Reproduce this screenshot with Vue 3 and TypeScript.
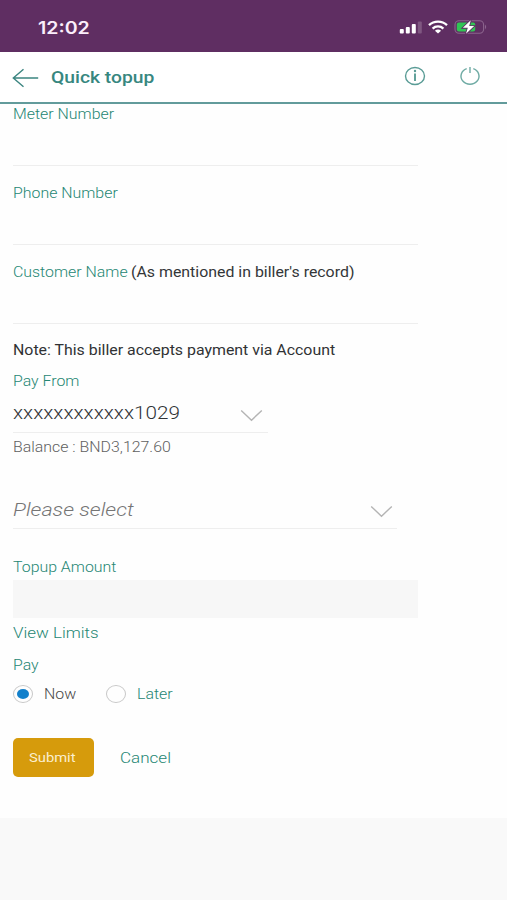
<script setup lang="ts">
import { ref } from 'vue'

interface Field {
  id: string
  label: string
  hint?: string
}

const fields: Field[] = [
  { id: 'meter', label: 'Meter Number' },
  { id: 'phone', label: 'Phone Number' },
  { id: 'customer', label: 'Customer Name', hint: "(As mentioned in biller's record)" },
]

const payWhen = ref<'now' | 'later'>('now')
</script>

<template>
  <div class="screen">
    <div class="status">
      <span class="wide clock">12:02</span>
      <div class="indicators">
        <svg class="signal" width="24" height="14" viewBox="0 0 24 14">
          <rect x="0.8" y="9" width="4" height="4.6" rx="1" fill="#fff" />
          <rect x="6.8" y="7" width="4" height="6.6" rx="1" fill="#fff" />
          <rect x="12.8" y="4" width="4" height="9.6" rx="1" fill="#fff" />
          <rect x="18.8" y="1.4" width="4" height="12.2" rx="1" fill="#fff" opacity="0.2" />
        </svg>
        <svg class="wifi" width="20" height="14" viewBox="0 0 20 14">
          <g fill="none" stroke="#fff" stroke-width="2.3">
            <path d="M1 5.2C6 .4 14 .4 19 5.2" />
            <path d="M4.6 8.6C7.6 5.7 12.4 5.7 15.4 8.6" />
          </g>
          <path d="M6.9 10.7Q10 8.2 13.1 10.7L10 13.6Z" fill="#fff" />
        </svg>
        <svg class="battery" width="34" height="16" viewBox="0 0 34 16">
          <rect x="1" y="1.7" width="28.6" height="12.6" rx="4" fill="none" stroke="#8b648d" stroke-width="1.1" />
          <path d="M31 5.6Q33.4 8 31 10.4Z" fill="#8b648d" />
          <rect x="2.8" y="3.4" width="18.4" height="9.2" rx="2" fill="#30c554" />
          <path d="M16.8 1.2L8.8 8.8H13.8L12 14.8L20.2 7H15.2Z" fill="#fff" stroke="#5f2e62" stroke-width="1.7" paint-order="stroke" />
        </svg>
      </div>
    </div>

    <header class="header">
      <svg class="back" width="27" height="20" viewBox="0 0 27 20">
        <path d="M11.5 1.2L1.3 10L11.5 18.8M1.3 10H26.2" fill="none" stroke="#3b8580" stroke-width="1.4" />
      </svg>
      <h1 class="wide title">Quick topup</h1>
      <svg class="info" width="22" height="20" viewBox="0 0 22 20">
        <ellipse cx="11" cy="10" rx="9.5" ry="8.5" fill="none" stroke="#5a9c96" stroke-width="1.4" />
        <path d="M11 7.6V15" stroke="#5a9c96" stroke-width="1.9" />
        <circle cx="11" cy="5" r="1.2" fill="#5a9c96" />
      </svg>
      <svg class="power" width="22" height="20" viewBox="0 0 22 20">
        <path d="M7.7 2.6A9 8.1 0 1 0 14.3 2.6M11 1V7" fill="none" stroke="#6faba4" stroke-width="1.4" />
      </svg>
    </header>

    <main class="form">
      <div v-for="field in fields" :key="field.id" class="field">
        <label class="wide label">{{ field.label }}</label>
        <span v-if="field.hint" class="wide hint">{{ field.hint }}</span>
      </div>

      <div class="row note"><span class="wide">Note: This biller accepts payment via Account</span></div>
      <div class="row pay-from"><span class="wide">Pay From</span></div>
      <div class="select account">
        <span class="wide">xxxxxxxxxxxx1029</span>
        <svg width="23" height="13" viewBox="0 0 23 13"><path d="M1.2 1.4L11.5 11.2L21.8 1.4" fill="none" stroke="#b4b4b4" stroke-width="1.4" /></svg>
      </div>
      <div class="row balance"><span class="wide">Balance : BND3,127.60</span></div>
      <div class="select choice">
        <span class="wide">Please select</span>
        <svg width="23" height="13" viewBox="0 0 23 13"><path d="M1.2 1.4L11.5 11.2L21.8 1.4" fill="none" stroke="#b4b4b4" stroke-width="1.4" /></svg>
      </div>
      <div class="row amount-label"><span class="wide">Topup Amount</span></div>
      <div class="amount"></div>
      <div class="row limits"><span class="wide">View Limits</span></div>
      <div class="row pay"><span class="wide">Pay</span></div>

      <div class="radios">
        <div class="radio now" @click="payWhen = 'now'">
          <i class="ring"><i v-if="payWhen === 'now'" class="dot"></i></i>
          <span class="wide">Now</span>
        </div>
        <div class="radio later" @click="payWhen = 'later'">
          <i class="ring"><i v-if="payWhen === 'later'" class="dot"></i></i>
          <span class="wide">Later</span>
        </div>
      </div>

      <div class="actions">
        <button class="submit"><span class="wide">Submit</span></button>
        <a class="wide cancel">Cancel</a>
      </div>
    </main>
    <footer class="footer"></footer>
  </div>
</template>

<style>
body {
  background: #fff;
}
</style>

<style scoped>
.screen {
  --stretch: 1.135;
  width: 507px;
  height: 900px;
  display: flex;
  flex-direction: column;
  overflow: hidden;
  background: #fefefe;
  font-family: Roboto, "Liberation Sans", sans-serif;
  font-size: 14px;
  font-weight: 300;
  color: #258673;
}
.wide {
  display: inline-block;
  white-space: nowrap;
  transform: scaleX(var(--stretch));
  transform-origin: left center;
}
.status {
  height: 52px;
  flex: none;
  box-sizing: border-box;
  padding: 3px 19px 0 38px;
  display: flex;
  align-items: center;
  justify-content: space-between;
  background: #5f2e62;
}
.clock {
  --stretch: 1.15;
  font-family: Inter, sans-serif;
  font-size: 17px;
  font-weight: 600;
  color: #fbeefb;
}
.indicators {
  display: flex;
  align-items: center;
  margin-top: -1px;
}
.wifi {
  margin-left: 5px;
}
.battery {
  margin-left: 6px;
}
.header {
  height: 52px;
  flex: none;
  box-sizing: border-box;
  padding: 0 26px 0 12px;
  display: flex;
  align-items: center;
  background: #fff;
  border-bottom: 2px solid #629b9b;
}
.title {
  margin: 0 auto 0 12px;
  font-size: 17px;
  font-weight: 500;
  line-height: 24px;
  color: #37877f;
}
.back {
  margin-top: 2px;
}
.info {
  margin: -2px 33px 0 0;
}
.power {
  margin-top: -2px;
}
.form {
  height: 714px;
  flex: none;
  box-sizing: border-box;
  padding-left: 13px;
}
.field {
  box-sizing: border-box;
  display: flex;
  width: 405px;
  height: 79px;
  padding-top: 17px;
  border-bottom: 1px solid #eee;
  line-height: 20px;
}
.field:first-child {
  height: 62px;
  padding-top: 0;
}
.label {
  flex: none;
}
.hint {
  margin-left: 17px;
  font-weight: 400;
  color: #333638;
}
.row {
  height: 20px;
  line-height: 20px;
}
.note {
  margin-top: 16px;
  font-weight: 400;
  color: #303234;
}
.pay-from {
  margin-top: 11px;
}
.select {
  box-sizing: border-box;
  display: flex;
  align-items: center;
  justify-content: space-between;
  height: 40px;
  border-bottom: 1px solid #eee;
}
.account {
  --stretch: 1.09;
  margin-top: 2px;
  width: 255px;
  padding-right: 5px;
  font-size: 19px;
  color: #303336;
}
.account svg {
  margin-top: 5px;
}
.balance {
  margin-top: 4px;
  color: #606060;
}
.choice {
  margin-top: 32px;
  width: 384px;
  padding-right: 4px;
  font-size: 19px;
  font-style: italic;
  color: #757575;
}
.choice span {
  margin-top: 1px;
}
.choice svg {
  margin-top: 5px;
}
.amount-label {
  margin-top: 28px;
}
.amount {
  width: 405px;
  height: 38px;
  margin-top: 3px;
  background: #f7f7f7;
}
.limits {
  --stretch: 1.17;
  margin-top: 6px;
  font-size: 14.5px;
}
.pay {
  margin-top: 11px;
}
.radios {
  display: flex;
  height: 20px;
  margin-top: 9px;
}
.radio {
  display: flex;
  align-items: center;
}
.now {
  width: 93px;
  color: #484848;
}
.ring {
  box-sizing: border-box;
  width: 20px;
  height: 18px;
  margin-right: 11px;
  display: flex;
  align-items: center;
  justify-content: center;
  border: 1px solid #c8c8c8;
  border-radius: 50%;
}
.dot {
  width: 12px;
  height: 10px;
  border-radius: 50%;
  background: #1280cb;
}
.actions {
  display: flex;
  align-items: center;
  margin-top: 34px;
}
.submit {
  width: 81px;
  height: 39px;
  margin-left: -0.5px;
  padding: 0 0 0 16px;
  border: 0;
  border-radius: 5px;
  background: #d69b0c;
  color: #fbefcf;
  font: 13px Roboto, sans-serif;
  text-align: left;
}
.cancel {
  margin-left: 26.5px;
  font-size: 15px;
}
.footer {
  flex: 1;
  background: #f9f9f9;
}
</style>
